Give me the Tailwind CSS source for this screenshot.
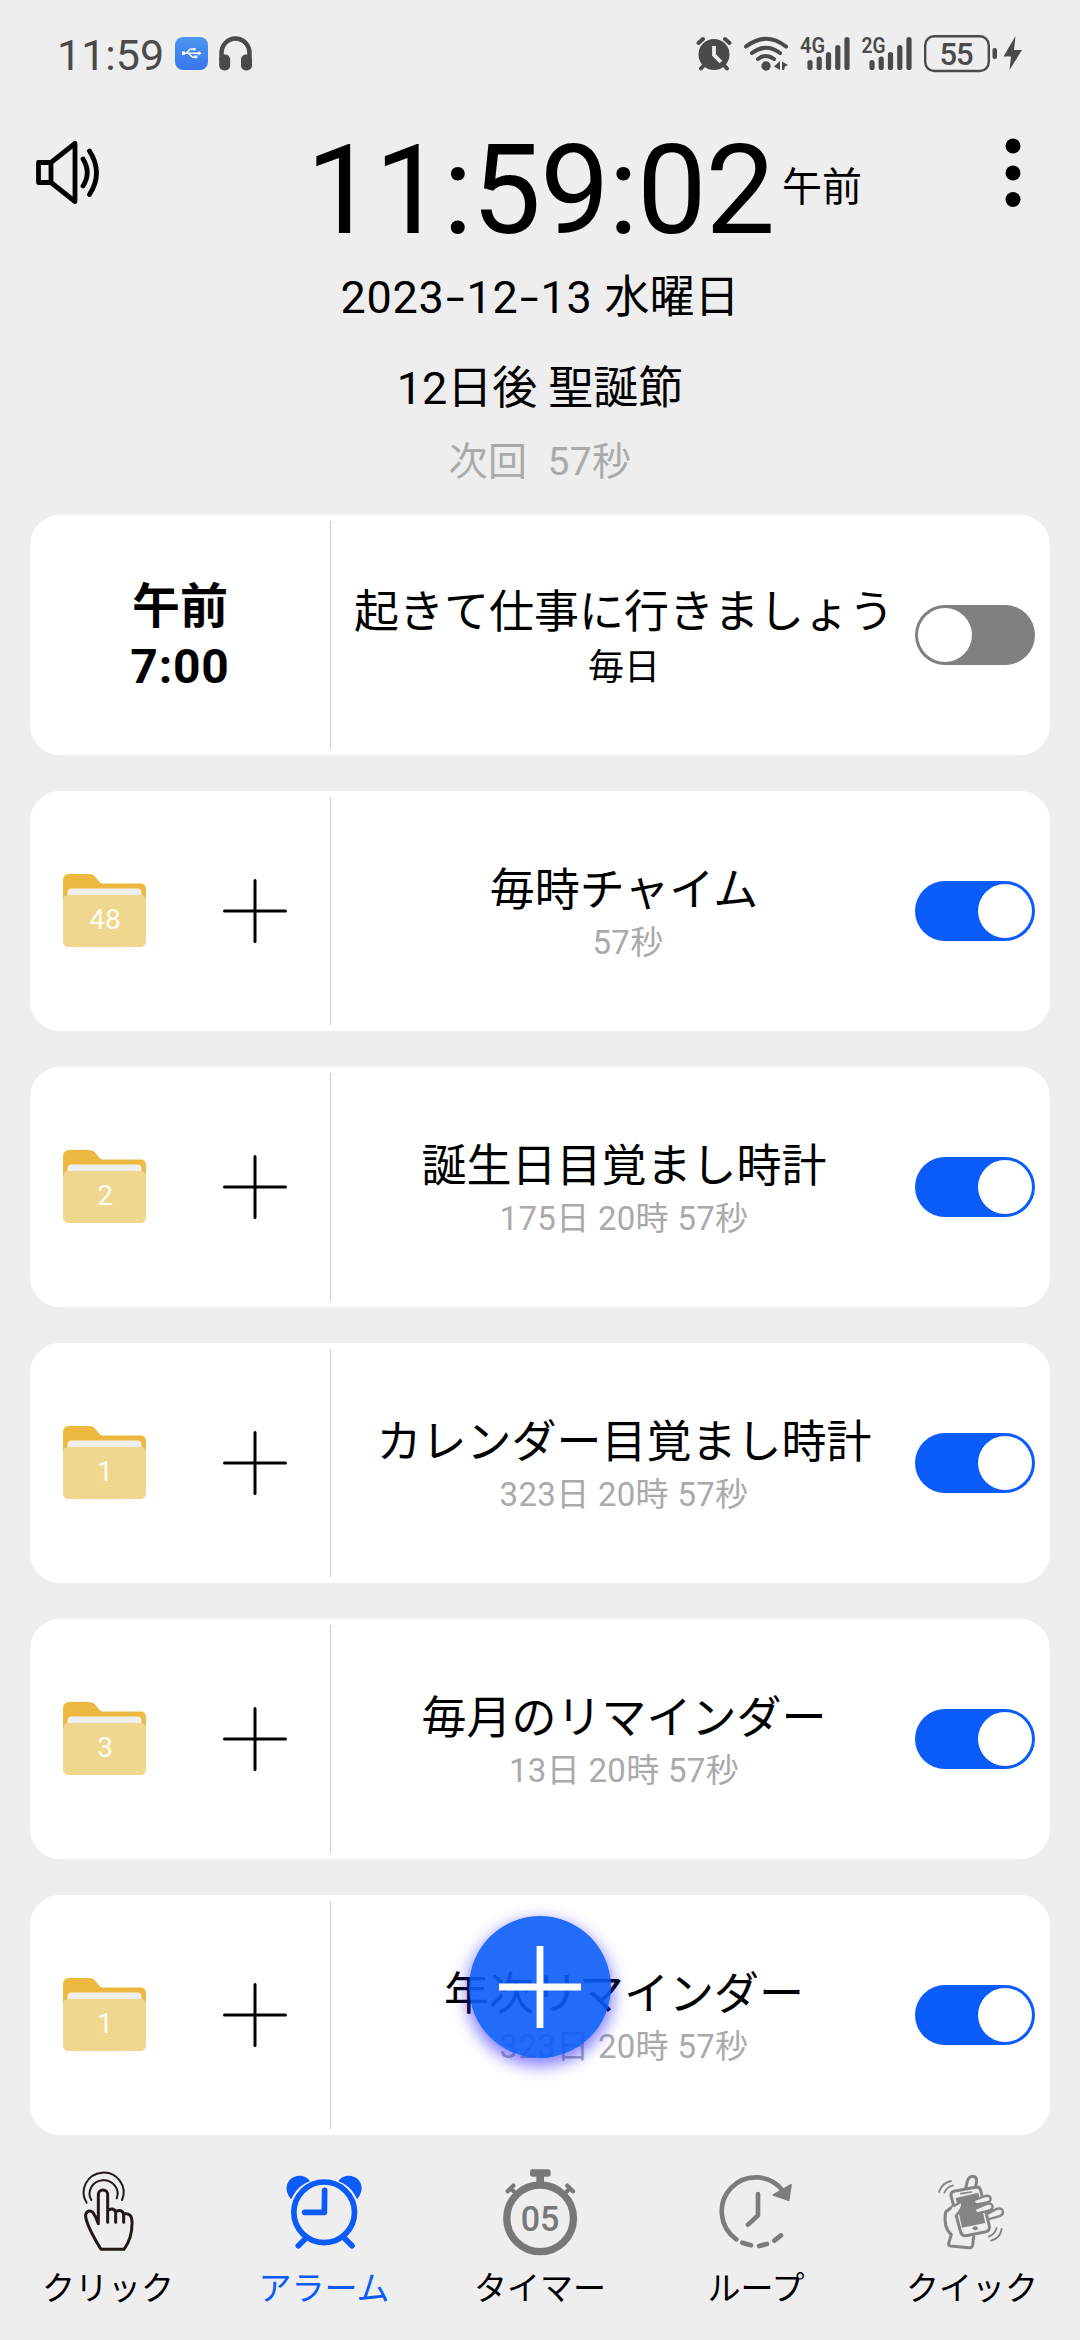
<!DOCTYPE html>
<html lang="ja">
<head>
<meta charset="utf-8">
<title>アラーム</title>
<script src="https://cdn.jsdelivr.net/npm/@tailwindcss/browser@4"></script>
</head>
<body class="relative w-[1080px] h-[2340px] overflow-hidden bg-[#eeeeee] text-black font-[Roboto,'Noto_Sans_CJK_JP',sans-serif] flex flex-col">

<svg class="hidden">
  <symbol id="folder" viewBox="0 0 84 74">
    <path fill="#eeb940" d="M0 6a6 6 0 0 1 6-6h21q3 0 5 2.500l5 6q1.500 1 3 1h38a5 5 0 0 1 5 5V40H0z"/>
    <path fill="#f1efee" d="M4.500 30V18.500a4 4 0 0 1 4-4h66a4 4 0 0 1 4 4V30z"/>
    <path fill="#f0d790" d="M0 26a5 5 0 0 1 5-5h73a5 5 0 0 1 5 5v41.500a5.500 5.500 0 0 1-5.500 5.500h-72a5.500 5.500 0 0 1-5.500-5.500z"/>
  </symbol>
  <symbol id="plus" viewBox="0 0 64 64">
    <path d="M32 1.500v61M1.500 32h61" stroke="#000" stroke-width="3" stroke-linecap="round"/>
  </symbol>
</svg>

<!-- status bar -->
<div class="h-[108px] shrink-0 flex items-center justify-between pl-[57px] pr-[58px] text-[#4a4a4a]">
  <div class="flex items-center">
    <span class="w-[118px] pt-[2px] text-[43px] leading-[44px]">11:59</span>
    <svg class="w-[78px] h-9" viewBox="175 36 78 36">
      <defs><linearGradient id="usb" x1="0" y1="0" x2="0" y2="1"><stop offset="0" stop-color="#4a97f2"/><stop offset="1" stop-color="#3a76ee"/></linearGradient></defs>
      <rect x="175" y="37" width="33" height="33" rx="8" fill="url(#usb)"/>
      <g stroke="#fff" stroke-width="1.400" fill="none"><path d="M183 53.300h16M186 53.300l4-4h4M188.500 53.300l4 4h3"/></g>
      <path fill="#fff" d="M182 51.500h3v3.600h-3zM198.500 51l3 2.300-3 2.300zM193 48h2.500v2.600H193zM194.500 55.500h2.800v2.800h-2.800z"/>
      <path d="M221.500 60V53a14 14.500 0 0 1 28 0v7" fill="none" stroke="#4a4a4a" stroke-width="4.500"/>
      <rect x="219.200" y="54.500" width="11" height="16" rx="5" fill="#4a4a4a"/><rect x="241" y="54.500" width="11" height="16" rx="5" fill="#4a4a4a"/>
    </svg>
  </div>
  <svg class="w-[326px] h-10" viewBox="696 34 326 40" fill="#4a4a4a">
    <circle cx="714" cy="54.500" r="15.500"/>
    <path d="M698.500 43l4.500-4M729.500 43l-4.500-4M705 64l-4 4.500M723 64l4 4.500" stroke="#4a4a4a" stroke-width="4" stroke-linecap="round"/>
    <path d="M714 46v9l7 7" fill="none" stroke="#eee" stroke-width="3.800"/>
    <g fill="none" stroke="#4a4a4a" stroke-width="4" stroke-linecap="round"><path d="M746 46.500q20-15.500 40 0M752 53q14-10.500 28 0M758 59q8-6 16 0"/></g>
    <circle cx="766" cy="66" r="4.700"/>
    <path d="M780 61v9l-6-3.500zM782 61.500l6 3.500-3 1.500-1 3.500h-2z"/>
    <text x="800" y="53" font-size="22" font-weight="600" textLength="25" lengthAdjust="spacingAndGlyphs">4G</text>
    <text x="861.500" y="53" font-size="22" font-weight="600" textLength="24" lengthAdjust="spacingAndGlyphs">2G</text>
    <g stroke="#4a4a4a" stroke-width="5.200" stroke-linecap="round">
      <path d="M810 62.500v5M819.200 59v8.500M828.500 54.500v13M837.800 47.500v20M847 39.500v28"/>
      <path d="M872 62.500v5M881.200 59v8.500M890.500 54.500v13M899.800 47.500v20M909 39.500v28"/>
    </g>
    <rect x="925.200" y="36.200" width="63.600" height="34.800" rx="9" fill="none" stroke="#4a4a4a" stroke-width="2.400"/>
    <rect x="992.500" y="48" width="4.500" height="11" rx="2"/>
    <text x="939.500" y="64.800" font-size="31" font-weight="500" textLength="34">55</text>
    <path d="M1015.500 36l-12 20.500h7.500l-1.500 13.500 12.500-20h-8z"/>
  </svg>
</div>

<!-- clock -->
<div class="h-[160px] shrink-0 flex items-center">
  <svg class="w-16 h-16 ml-[36px] -mt-[31px] shrink-0" viewBox="36 141 64 64" fill="none" stroke="#000" stroke-width="4.800" stroke-linecap="round" stroke-linejoin="round">
    <path d="M38.500 162.500H51v20H38.500zM51 162.500L75 143.500v58L51 182.500M83 159q8.500 13.500 0 27M89.500 151q14 22 0 43.500"/>
  </svg>
  <div class="ml-[206px] pt-[5px] w-[476px] text-[124px] leading-[160px] tracking-[-1.3px] whitespace-nowrap">11:59:02</div>
  <div class="text-[40px] leading-[60px] w-[84px]">午前</div>
  <svg class="w-5 h-[72px] ml-[137px] -mt-[31px]" viewBox="0 0 20 72"><circle cx="10" cy="9" r="7.500"/><circle cx="10" cy="36" r="7.500"/><circle cx="10" cy="62.500" r="7.500"/></svg>
</div>
<div class="pt-[2px] h-[58px] shrink-0 flex justify-center text-[45px] leading-[56px] whitespace-pre"><span class="tracking-[0.7px]">2023</span><span class="w-[22px] flex justify-center"><span class="inline-block scale-x-150">-</span></span><span class="tracking-[0.7px]">12</span><span class="w-[22px] flex justify-center"><span class="inline-block scale-x-150">-</span></span><span class="tracking-[0.7px]">13 </span><span>水曜日</span></div>
<div class="mt-[33px] h-[60px] shrink-0 text-center text-[45px] leading-[60px]">12日後 聖誕節</div>
<div class="mt-[18px] mb-[28px] h-[50px] shrink-0 text-center text-[39px] leading-[50px] tracking-[0.4px] text-[#aaaaaa] whitespace-pre">次回  57秒</div>

<!-- alarm list -->
<main class="px-[30px] flex flex-col gap-9 shrink-0">
  <section class="h-[240px] bg-white rounded-[30px] flex items-center">
    <div class="w-[300px] pt-[4px] text-center font-bold text-[48px] leading-[60px]"><div>午前</div><div class="tracking-[0.8px]">7:00</div></div>
    <div class="w-px h-[228px] bg-[#cccccc]"></div>
    <div class="w-[584px] pt-[5px] pl-[2px] text-center whitespace-nowrap"><div class="text-[45px] leading-[60px]">起きて仕事に行きましょう</div><div class="text-[36px] leading-[50px]">毎日</div></div>
    <div class="w-[120px] h-[60px] rounded-full bg-[#808080] p-[3px] flex justify-start"><div class="size-[54px] rounded-full bg-white"></div></div>
  </section>

  <section class="h-[240px] bg-white rounded-[30px] flex items-center">
    <div class="w-[300px] flex items-center pl-[33px]">
      <div class="grid place-items-center"><svg class="w-[84px] h-[74px] col-start-1 row-start-1"><use href="#folder"/></svg><span class="col-start-1 row-start-1 mt-[18px] text-[28px] leading-8 text-[#fffdf0]">48</span></div>
      <svg class="size-16 ml-[76px]"><use href="#plus"/></svg>
    </div>
    <div class="w-px h-[228px] bg-[#cccccc]"></div>
    <div class="w-[584px] pt-[4px] pl-[2px] text-center whitespace-nowrap"><div class="text-[45px] leading-[60px]">毎時チャイム</div><div class="text-[33px] leading-[44px] tracking-[0.3px] pl-[8px] text-[#aaaaaa]">57秒</div></div>
    <div class="w-[120px] h-[60px] rounded-full bg-[#0b5bf8] p-[3px] flex justify-end"><div class="size-[54px] rounded-full bg-white"></div></div>
  </section>

  <section class="h-[240px] bg-white rounded-[30px] flex items-center">
    <div class="w-[300px] flex items-center pl-[33px]">
      <div class="grid place-items-center"><svg class="w-[84px] h-[74px] col-start-1 row-start-1"><use href="#folder"/></svg><span class="col-start-1 row-start-1 mt-[18px] text-[28px] leading-8 text-[#fffdf0]">2</span></div>
      <svg class="size-16 ml-[76px]"><use href="#plus"/></svg>
    </div>
    <div class="w-px h-[228px] bg-[#cccccc]"></div>
    <div class="w-[584px] pt-[4px] pl-[2px] text-center whitespace-nowrap"><div class="text-[45px] leading-[60px]">誕生日目覚まし時計</div><div class="text-[33px] leading-[44px] tracking-[0.3px] text-[#aaaaaa]">175日 20時 57秒</div></div>
    <div class="w-[120px] h-[60px] rounded-full bg-[#0b5bf8] p-[3px] flex justify-end"><div class="size-[54px] rounded-full bg-white"></div></div>
  </section>

  <section class="h-[240px] bg-white rounded-[30px] flex items-center">
    <div class="w-[300px] flex items-center pl-[33px]">
      <div class="grid place-items-center"><svg class="w-[84px] h-[74px] col-start-1 row-start-1"><use href="#folder"/></svg><span class="col-start-1 row-start-1 mt-[18px] text-[28px] leading-8 text-[#fffdf0]">1</span></div>
      <svg class="size-16 ml-[76px]"><use href="#plus"/></svg>
    </div>
    <div class="w-px h-[228px] bg-[#cccccc]"></div>
    <div class="w-[584px] pt-[4px] pl-[2px] text-center whitespace-nowrap"><div class="text-[45px] leading-[60px]">カレンダー目覚まし時計</div><div class="text-[33px] leading-[44px] tracking-[0.3px] text-[#aaaaaa]">323日 20時 57秒</div></div>
    <div class="w-[120px] h-[60px] rounded-full bg-[#0b5bf8] p-[3px] flex justify-end"><div class="size-[54px] rounded-full bg-white"></div></div>
  </section>

  <section class="h-[240px] bg-white rounded-[30px] flex items-center">
    <div class="w-[300px] flex items-center pl-[33px]">
      <div class="grid place-items-center"><svg class="w-[84px] h-[74px] col-start-1 row-start-1"><use href="#folder"/></svg><span class="col-start-1 row-start-1 mt-[18px] text-[28px] leading-8 text-[#fffdf0]">3</span></div>
      <svg class="size-16 ml-[76px]"><use href="#plus"/></svg>
    </div>
    <div class="w-px h-[228px] bg-[#cccccc]"></div>
    <div class="w-[584px] pt-[4px] pl-[2px] text-center whitespace-nowrap"><div class="text-[45px] leading-[60px]">毎月のリマインダー</div><div class="text-[33px] leading-[44px] tracking-[0.3px] text-[#aaaaaa]">13日 20時 57秒</div></div>
    <div class="w-[120px] h-[60px] rounded-full bg-[#0b5bf8] p-[3px] flex justify-end"><div class="size-[54px] rounded-full bg-white"></div></div>
  </section>

  <section class="h-[240px] bg-white rounded-[30px] flex items-center">
    <div class="w-[300px] flex items-center pl-[33px]">
      <div class="grid place-items-center"><svg class="w-[84px] h-[74px] col-start-1 row-start-1"><use href="#folder"/></svg><span class="col-start-1 row-start-1 mt-[18px] text-[28px] leading-8 text-[#fffdf0]">1</span></div>
      <svg class="size-16 ml-[76px]"><use href="#plus"/></svg>
    </div>
    <div class="w-px h-[228px] bg-[#cccccc]"></div>
    <div class="w-[584px] pt-[4px] pl-[2px] text-center whitespace-nowrap"><div class="text-[45px] leading-[60px]">年次リマインダー</div><div class="text-[33px] leading-[44px] tracking-[0.3px] text-[#aaaaaa]">323日 20時 57秒</div></div>
    <div class="w-[120px] h-[60px] rounded-full bg-[#0b5bf8] p-[3px] flex justify-end"><div class="size-[54px] rounded-full bg-white"></div></div>
  </section>
</main>

<!-- bottom navigation -->
<nav class="grid grid-cols-5 pt-[30px] text-[33px] leading-[48px] text-center">
  <div class="flex flex-col items-center gap-[5px]">
    <svg class="w-[100px] h-[95px]" viewBox="174 105 300 285" fill="none" stroke="#231815" stroke-width="9" stroke-linejoin="round" stroke-linecap="round">
      <path d="M295 281V194a14 14 0 0 1 28 0V277M294 279Q289 262 279 248C267 236 255 248 257 261Q262 291 303 358H372Q396 325 396 281C397 258 389 249 371 252V277M325 240Q344 232 347 247V277M348 244Q368 236 371 254"/>
      <path stroke-width="6" d="M260 218A60 59 0 1 1 366 210M274 210A42 40 0 1 1 350 205"/>
    </svg>
    <span>クリック</span>
  </div>
  <div class="flex flex-col items-center gap-[5px] text-[#0b5bf8]">
    <svg class="w-[100px] h-[95px]" viewBox="822 105 300 285" fill="none" stroke="#0b5bf8" stroke-width="17" stroke-linejoin="round" stroke-linecap="round">
      <circle cx="972.500" cy="247" r="91"/>
      <path d="M974 181L973 247H914M918 324L895 347M1030 321L1056 347"/>
      <path stroke="none" fill="#0b5bf8" d="M874 208C849 180 858 140 898 137C914 137 925 145 930 154C904 163 885 182 874 208ZM1071 208C1096 180 1087 140 1047 137C1031 137 1020 145 1015 154C1041 163 1060 182 1071 208Z"/>
    </svg>
    <span>アラーム</span>
  </div>
  <div class="flex flex-col items-center gap-[5px]">
    <svg class="w-[100px] h-[95px]" viewBox="210 105 300 285" fill="#787878">
      <circle cx="360.500" cy="265" r="100" fill="none" stroke="#787878" stroke-width="22"/>
      <rect x="330" y="118" width="62" height="22" rx="7"/><rect x="349" y="136" width="23" height="22"/>
      <path d="M263 184L280 167M442 167L459 184M273 176L281 184M449 176L441 184" stroke="#787878" stroke-width="13" stroke-linecap="round"/>
      <text x="302" y="302" font-size="104" font-weight="500" textLength="116" lengthAdjust="spacingAndGlyphs">05</text>
    </svg>
    <span>タイマー</span>
  </div>
  <div class="flex flex-col items-center gap-[5px]">
    <svg class="w-[100px] h-[95px]" viewBox="138 105 300 285" fill="none" stroke="#7c7c7c" stroke-width="14" stroke-linecap="round" stroke-linejoin="round">
      <path d="M229 328A102 102 0 1 1 368 182M247 338L273 346M297 348L321 342M343 332L363 316M294 192V256L264 284"/>
      <path d="M393 164L386 211L340 195Z" fill="#7c7c7c" stroke-width="5"/>
    </svg>
    <span>ループ</span>
  </div>
  <div class="flex flex-col items-center gap-[5px]">
    <svg class="w-[100px] h-[95px]" viewBox="786 105 300 285" fill="none" stroke="#848484" stroke-width="9" stroke-linecap="round" stroke-linejoin="round">
      <path d="M917 176L922 154Q927 139 938 139Q951 141 950 154L946 172"/>
      <path d="M882 226L857 246Q849 292 874 314L866 340Q864 347 872 348L926 353Q936 355 938 345L941 320"/>
      <path fill="#eee" d="M882 184L946 172Q959 169 962 181L988 288Q990 302 978 305L918 317Q906 319 902 306L873 197Q871 186 882 184Z"/>
      <path stroke="none" fill="#848484" d="M887 204L955 188L976 279L906 293Z"/>
      <path d="M902 191L934 186" stroke-width="5"/>
      <path stroke="none" fill="#eee" d="M906 215L906 236L884 262L870 250L880 226Z"/>
      <path d="M907 214Q893 222 882 228M906 216Q911 233 887 258" stroke-width="7"/>
      <ellipse cx="946" cy="295" rx="8" ry="6" fill="#848484" stroke="none"/>
      <g fill="#eee" stroke-width="7"><path d="M944 210L976 198Q990 195 992 206Q992 215 982 217L950 223Q937 217 944 210ZM948 235L982 221Q997 219 998 230Q997 240 986 242L952 250Q939 243 948 235ZM984 250L1012 236Q1029 233 1029 247Q1028 256 1016 259L989 267"/></g>
      <path stroke-width="5.500" d="M837 186Q846 159 873 153M853 188Q861 170 879 166M993 332Q1020 326 1025 297M986 320Q1004 314 1010 294"/>
    </svg>
    <span>クイック</span>
  </div>
</nav>

<!-- floating add button -->
<button class="absolute left-[469px] top-[1916px] size-[142px] rounded-full bg-[#0b5bf8]/90 shadow-[0_6px_16px_2px_rgba(50,40,255,0.6)] grid place-items-center" aria-label="追加">
  <svg class="size-[82px]" viewBox="0 0 82 82"><path d="M41 0v82M0 41h82" stroke="#fff" stroke-width="6.800"/></svg>
</button>
</body>
</html>
